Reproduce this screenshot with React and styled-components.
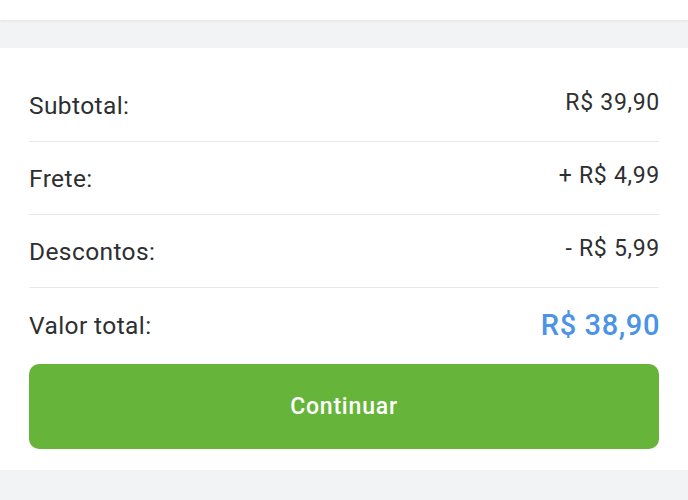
import React from "react";
import styled, { createGlobalStyle } from "styled-components";

const Global = createGlobalStyle`
  html, body { margin: 0; padding: 0; background: #f2f3f5; }
  body { font-family: Roboto, "Noto Sans", "Liberation Sans", sans-serif; }
  * { box-sizing: border-box; }
`;

const Page = styled.div`
  width: 688px;
  height: 500px;
  overflow: hidden;
  background: #f2f3f5;
  display: flex;
  flex-direction: column;
  gap: 28px;
`;

const TopCard = styled.div`
  height: 20px;
  background: #ffffff;
  box-shadow: 0 1px 3px rgba(0, 0, 0, 0.07);
`;

const SummaryCard = styled.section`
  background: #ffffff;
  padding: 21px 29px 21px;
  display: flex;
  flex-direction: column;
`;

const Row = styled.div`
  height: ${(p) => p.$h}px;
  display: flex;
  align-items: center;
  justify-content: space-between;
  border-bottom: ${(p) => (p.$last ? "none" : "1px solid #e6e7e9")};
`;

const Label = styled.span`
  font-size: 24.5px;
  color: #2e2f31;
  letter-spacing: 0.4px;
`;

const Value = styled.span`
  font-size: ${(p) => (p.$total ? "29px" : "23px")};
  font-weight: ${(p) => (p.$total ? 500 : 400)};
  color: ${(p) => (p.$total ? "#4a93e6" : "#2e2f31")};
  letter-spacing: ${(p) => (p.$total ? "0.6px" : "0.7px")};
  padding-bottom: ${(p) => (p.$total ? "0" : "6px")};
  margin-right: -1px;
`;

const Button = styled.button`
  margin-top: 2px;
  height: 85px;
  border: none;
  border-radius: 10px;
  background: #67b43b;
  color: #ffffff;
  font-family: Roboto, "Noto Sans", sans-serif;
  font-size: 23px;
  font-weight: 500;
  letter-spacing: 0.8px;
  cursor: pointer;
`;

const rows = [
  { label: "Subtotal:", value: "R$ 39,90" },
  { label: "Frete:", value: "+ R$ 4,99" },
  { label: "Descontos:", value: "- R$ 5,99" },
];

export default function App() {
  return (
    <>
      <Global />
      <Page>
        <TopCard />
        <SummaryCard>
          {rows.map((r) => (
            <Row key={r.label} $h={73}>
              <Label>{r.label}</Label>
              <Value>{r.value}</Value>
            </Row>
          ))}
          <Row $h={74} $last>
            <Label>Valor total:</Label>
            <Value $total>R$ 38,90</Value>
          </Row>
          <Button>Continuar</Button>
        </SummaryCard>
      </Page>
    </>
  );
}
